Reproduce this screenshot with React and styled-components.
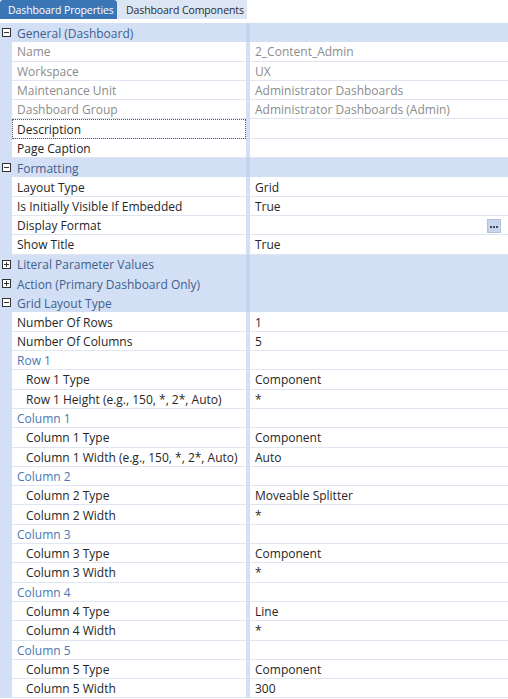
import React from "react";
import styled, { createGlobalStyle, css } from "styled-components";

const Global = createGlobalStyle`
  html, body { margin: 0; padding: 0; background: #ffffff; }
  body { font-family: "Open Sans", "Noto Sans", sans-serif; font-size: 12px; }
`;

const Page = styled.div`
  width: 508px;
  height: 699px;
  overflow: hidden;
  background: #ffffff;
  display: flex;
  flex-direction: column;
`;

const TabBar = styled.div`
  display: flex;
  height: 19px;
  margin-bottom: 4px;
`;

const Tab = styled.div`
  display: flex;
  align-items: center;
  padding: 0 0 0 ${(p) => (p.$active ? 8 : 9)}px;
  width: ${(p) => p.$w}px;
  box-sizing: border-box;
  font-size: 10.5px;
  letter-spacing: -0.1px;
  color: ${(p) => (p.$active ? "#ffffff" : "#2b2b2b")};
  background: ${(p) => (p.$active ? "#3a76b6" : "#dbe5f4")};
  border-radius: ${(p) => (p.$active ? "3px 3px 0 0" : "0")};
  white-space: nowrap;
`;

const Grid = styled.div`
  display: flex;
  flex-direction: column;
`;

const Row = styled.div`
  display: grid;
  grid-template-columns: 12px 234px 4px 1fr;
  height: 19.3px;
  box-sizing: border-box;
  background: ${(p) => (p.$group ? "#d3dff4" : "#ffffff")};
`;

const Gutter = styled.div`
  background: #d3dff4;
  display: flex;
  align-items: center;
  justify-content: center;
`;

const NameCell = styled.div`
  display: flex;
  align-items: center;
  padding-left: ${(p) => 5 + p.$indent * 9}px;
  padding-top: 1px;
  color: ${(p) => p.$color};
  border-bottom: 1px solid #dfe6f1;
  box-sizing: border-box;
  white-space: nowrap;
  overflow: hidden;
  ${(p) =>
    p.$focus &&
    css`
      outline: 1px dotted #555;
      outline-offset: -1px;
    `}
`;

const Splitter = styled.div`
  background: #d3dff4;
`;

const ValueCell = styled.div`
  display: flex;
  align-items: center;
  justify-content: space-between;
  padding-left: 5px;
  padding-right: 7px;
  padding-top: 1px;
  color: ${(p) => p.$color};
  border-bottom: 1px solid #dfe6f1;
  box-sizing: border-box;
  white-space: nowrap;
`;

const GroupLabel = styled.div`
  grid-column: 2 / 3;
  display: flex;
  align-items: center;
  padding-left: 5px;
  padding-top: 1px;
  color: #3f5f8f;
  white-space: nowrap;
`;

const GroupRest = styled.div`
  grid-column: 4 / 5;
`;

const GroupSplit = styled.div`
  grid-column: 3 / 4;
  background: #c6d4ec;
`;

const ExpandBox = styled.div`
  width: 7px;
  height: 7px;
  border: 1px solid #333;
  background: #fff;
  position: relative;
  &::before {
    content: "";
    position: absolute;
    left: 1px;
    right: 1px;
    top: 3px;
    height: 1px;
    background: #333;
  }
  ${(p) =>
    !p.$open &&
    css`
      &::after {
        content: "";
        position: absolute;
        top: 1px;
        bottom: 1px;
        left: 3px;
        width: 1px;
        background: #333;
      }
    `}
`;

const EllipsisBtn = styled.div`
  width: 14px;
  height: 14px;
  background: #c9d5ec;
  border: 1px solid #b3c2dd;
  box-sizing: border-box;
  display: flex;
  align-items: center;
  justify-content: center;
  gap: 1px;
  padding-top: 2px;
`;

const Dot = styled.span`
  width: 2px;
  height: 2px;
  background: #4a4a4a;
`;

const rows = [
  { group: "General (Dashboard)", open: true },
  { name: "Name", value: "2_Content_Admin", dis: true },
  { name: "Workspace", value: "UX", dis: true },
  { name: "Maintenance Unit", value: "Administrator Dashboards", dis: true },
  { name: "Dashboard Group", value: "Administrator Dashboards (Admin)", dis: true },
  { name: "Description", value: "", focus: true },
  { name: "Page Caption", value: "" },
  { group: "Formatting", open: true },
  { name: "Layout Type", value: "Grid" },
  { name: "Is Initially Visible If Embedded", value: "True" },
  { name: "Display Format", value: "", btn: true },
  { name: "Show Title", value: "True" },
  { group: "Literal Parameter Values", open: false },
  { group: "Action (Primary Dashboard Only)", open: false },
  { group: "Grid Layout Type", open: true },
  { name: "Number Of Rows", value: "1" },
  { name: "Number Of Columns", value: "5" },
  { name: "Row 1", sub: true },
  { name: "Row 1 Type", value: "Component", indent: 1 },
  { name: "Row 1 Height (e.g., 150, *, 2*, Auto)", value: "*", indent: 1 },
  { name: "Column 1", sub: true },
  { name: "Column 1 Type", value: "Component", indent: 1 },
  { name: "Column 1 Width (e.g., 150, *, 2*, Auto)", value: "Auto", indent: 1 },
  { name: "Column 2", sub: true },
  { name: "Column 2 Type", value: "Moveable Splitter", indent: 1 },
  { name: "Column 2 Width", value: "*", indent: 1 },
  { name: "Column 3", sub: true },
  { name: "Column 3 Type", value: "Component", indent: 1 },
  { name: "Column 3 Width", value: "*", indent: 1 },
  { name: "Column 4", sub: true },
  { name: "Column 4 Type", value: "Line", indent: 1 },
  { name: "Column 4 Width", value: "*", indent: 1 },
  { name: "Column 5", sub: true },
  { name: "Column 5 Type", value: "Component", indent: 1 },
  { name: "Column 5 Width", value: "300", indent: 1 },
];

export default function App() {
  return (
    <Page>
      <Global />
      <TabBar>
        <Tab $active $w={117}>Dashboard Properties</Tab>
        <Tab $w={130}>Dashboard Components</Tab>
      </TabBar>
      <Grid>
        {rows.map((r, i) =>
          r.group ? (
            <Row key={i} $group>
              <Gutter>
                <ExpandBox $open={r.open} />
              </Gutter>
              <GroupLabel>{r.group}</GroupLabel>
              <GroupSplit />
              <GroupRest />
            </Row>
          ) : (
            <Row key={i}>
              <Gutter />
              <NameCell
                $indent={r.indent || 0}
                $focus={r.focus}
                $color={r.sub ? "#4a78b2" : r.dis ? "#8c8c8c" : "#262626"}
              >
                {r.name}
              </NameCell>
              <Splitter />
              <ValueCell $color={r.dis ? "#8c8c8c" : "#262626"}>
                <span>{r.value}</span>
                {r.btn && (
                  <EllipsisBtn>
                    <Dot />
                    <Dot />
                    <Dot />
                  </EllipsisBtn>
                )}
              </ValueCell>
            </Row>
          )
        )}
      </Grid>
    </Page>
  );
}
